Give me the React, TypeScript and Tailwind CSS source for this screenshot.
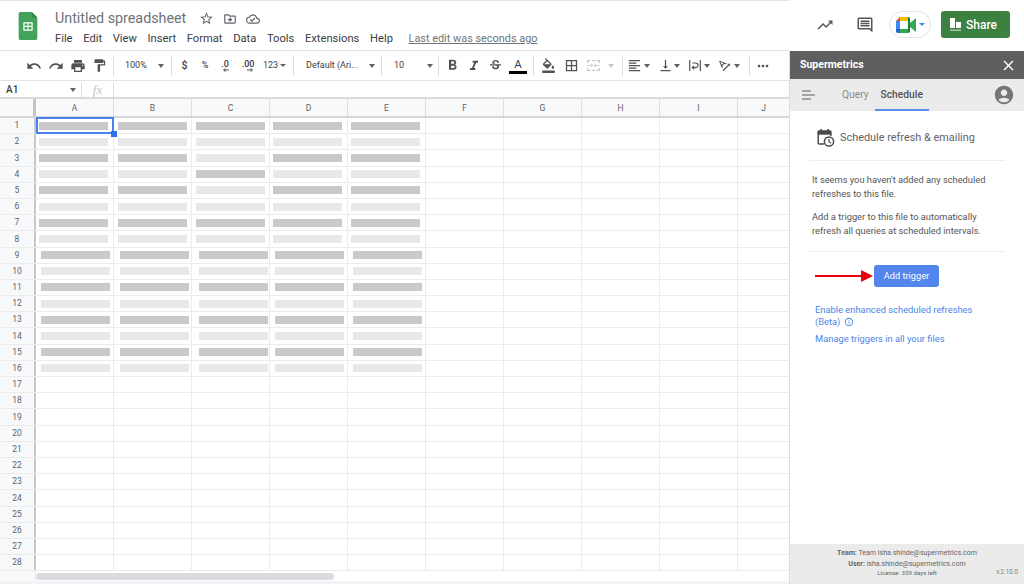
import React from "react";
import {
  MdUndo, MdRedo, MdPrint, MdFormatPaint, MdFormatBold, MdFormatItalic, MdStrikethroughS,
  MdFormatColorFill, MdBorderAll, MdFormatAlignLeft, MdVerticalAlignBottom,
  MdMoreHoriz, MdStarBorder, MdOutlineDriveFileMove, MdOutlineCloudDone, MdTrendingUp, MdOutlineComment,
  MdClose, MdAccountCircle, MdOutlineInfo, MdTextRotationAngleup,
} from "react-icons/md";

const Caret = ({ light }: { light?: boolean }) => (
  <span className={`inline-block w-0 h-0 shrink-0 border-x-[3.5px] border-x-transparent border-t-[4px] ${light ? "border-t-[#c4c7c9]" : "border-t-[#5f6368]"}`} />
);

const Sep = () => (
  <div className="w-[6px] flex justify-center shrink-0"><div className="w-px h-[20px] bg-[#dadce0]" /></div>
);

const Slot = ({ w, children, className = "" }: { w: string; children?: React.ReactNode; className?: string }) => (
  <div className={`${w} flex items-center justify-center shrink-0 ${className}`}>{children}</div>
);

const ic = "text-[#4f5357]";

const TinyArrow = ({ right, className }: { right?: boolean; className: string }) => (
  <svg width="6" height="4" viewBox="0 0 6 4" className={className}>
    <path d={right ? "M0 2h5M3.5 .5L5.5 2 3.5 3.5" : "M6 2H1M2.5 .5L.5 2 2.5 3.5"} stroke="#3c4043" strokeWidth="0.9" fill="none" />
  </svg>
);

function Toolbar() {
  return (
    <div className="h-[30px] border-b border-[#e3e3e3] flex items-center pl-[23px] text-[9px] text-[#3c4043]">
      <Slot w="w-[22px]"><MdUndo size={16} className={ic} /></Slot>
      <Slot w="w-[22px]"><MdRedo size={16} className={ic} /></Slot>
      <Slot w="w-[21px]"><MdPrint size={16} className={ic} /></Slot>
      <Slot w="w-[22px]"><MdFormatPaint size={15} className={ic} /></Slot>
      <Sep />
      <div className="w-[52px] flex items-center justify-between pl-[9px] pr-[4px] shrink-0"><span>100%</span><Caret /></div>
      <Sep />
      <Slot w="w-[17px]" className="ml-[2px] text-[10.5px] font-medium">$</Slot>
      <Slot w="w-[24px]" className="text-[9px] font-medium">%</Slot>
      <Slot w="w-[16px]" className="relative text-[9px] font-medium -mt-[2px]">.0<TinyArrow className="absolute top-[10px] left-[6px]" /></Slot>
      <Slot w="w-[30px]" className="relative text-[9px] font-medium -mt-[2px]">.00<TinyArrow right className="absolute top-[10px] left-[14px]" /></Slot>
      <div className="w-[27px] flex items-center gap-[2px] shrink-0"><span>123</span><span className="inline-block w-0 h-0 border-x-[3px] border-x-transparent border-t-[3.5px] border-t-[#5f6368]" /></div>
      <Sep />
      <div className="w-[82px] flex items-center pl-[10px] shrink-0 gap-[7px]"><span className="w-[56px] whitespace-nowrap">Default (Ari...</span><Caret /></div>
      <Sep />
      <div className="w-[51px] flex items-center justify-between pl-[10px] pr-[2px] shrink-0"><span>10</span><Caret /></div>
      <Sep />
      <Slot w="w-[21px]" className="ml-[1px]"><MdFormatBold size={17} className={ic} /></Slot>
      <Slot w="w-[22px]"><MdFormatItalic size={16} className={ic} /></Slot>
      <Slot w="w-[21px]"><MdStrikethroughS size={15} className={ic} /></Slot>
      <Slot w="w-[24px]"><div className="flex flex-col items-center"><span className="text-[11.5px] leading-[13px]">A</span><div className="w-[18px] h-[3px] bg-black" /></div></Slot>
      <Sep />
      <Slot w="w-[23px]" className="ml-[1px]"><MdFormatColorFill size={15} className={ic} /></Slot>
      <Slot w="w-[22px]"><MdBorderAll size={15} className={ic} /></Slot>
      <Slot w="w-[23px]">
        <svg width="13" height="11" viewBox="0 0 13 11" fill="none" stroke="#c4c7c9" strokeWidth="1.1">
          <path d="M.6 3V.6h3M5 .6h3M9.4 .6h3V3M.6 8v2.4h3M5 10.4h3M9.4 10.4h3V8M.6 5.5h3M9.4 5.5h3M4 4l1.5 1.5L4 7M9 4L7.5 5.5 9 7" />
        </svg>
      </Slot>
      <Slot w="w-[14px]" className="pr-[3px]"><Caret light /></Slot>
      <Sep />
      <div className="w-[26px] flex items-center shrink-0 gap-[2px] pl-[2px]"><MdFormatAlignLeft size={15} className={ic} /><Caret /></div>
      <div className="w-[31px] flex items-center shrink-0 gap-[1px] pl-[7px]"><MdVerticalAlignBottom size={15} className={ic} /><Caret /></div>
      <div className="w-[28px] flex items-center shrink-0 gap-[3px] pl-[7px]">
        <svg width="12" height="11" viewBox="0 0 12 11" fill="none" stroke="#4f5357" strokeWidth="1.2" className="shrink-0">
          <path d="M.7 0v11M11.3 0v11M3.5 3h3.2a2.3 2.3 0 0 1 0 4.6H3.5M5 6l-1.7 1.6L5 9.2" />
        </svg>
        <Caret />
      </div>
      <div className="w-[36px] flex items-center shrink-0 gap-[2px] pl-[7px]"><MdTextRotationAngleup size={15} className={ic} /><Caret /></div>
      <Sep />
      <Slot w="w-[22px]"><MdMoreHoriz size={16} className={ic} /></Slot>
    </div>
  );
}

const columns = ["A", "B", "C", "D", "E", "F", "G", "H", "I", "J"];
const colW = ["w-[78px]", "w-[78px]", "w-[78px]", "w-[78px]", "w-[78px]", "w-[78px]", "w-[78px]", "w-[78px]", "w-[78px]", "flex-1"];
const firstMl = ["ml-[3px]", "ml-[4px]", "ml-[4px]", "ml-[3px]", "ml-[3px]"];
const lastMl = ["ml-[5px]", "ml-[6px]", "ml-[7px]", "ml-[5px]", "ml-[5px]"];

function isDark(row: number, col: number) {
  if (row === 3 || row === 5) return col !== 2;
  if (row === 4) return col === 2;
  return row % 2 === 1;
}

function Row({ n }: { n: number }) {
  return (
    <div className="h-[16.2px] flex border-b border-[#ececec]">
      <div className="w-[36px] shrink-0 bg-[#f8f9fa] border-r-2 border-[#c7c7c7] flex items-center justify-center text-[8.5px] text-[#5f6368]">{n}</div>
      {columns.map((c, i) => (
        <div key={c} className={`${colW[i]} ${i < 9 ? "shrink-0 border-r border-[#ececec]" : ""} relative flex items-center`}>
          {i < 5 && n <= 16 && (
            <div className={`${n <= 8 ? firstMl[i] : lastMl[i]} w-[69px] h-[8px] ${isDark(n, i) ? "bg-[#c9c9c9]" : "bg-[#e8e8e8]"}`} />
          )}
          {n === 1 && i === 0 && (
            <div className="absolute z-10 left-0 -top-px w-[78px] h-[17px] border-2 border-[#4a80ec]">
              <div className="absolute -right-[5px] -bottom-[5px] w-[6px] h-[6px] bg-[#2f6fec]" />
            </div>
          )}
        </div>
      ))}
    </div>
  );
}

function SheetsLogo() {
  return (
    <svg width="20" height="28" viewBox="0 0 20 30">
      <path d="M2 0h12l6 6v22a2 2 0 0 1-2 2H2a2 2 0 0 1-2-2V2a2 2 0 0 1 2-2z" fill="#43a35a" />
      <path d="M14 0l6 6h-6z" fill="#2f8a47" />
      <path d="M5 11h10v9H5z M6.3 12.3v2.4h3.1v-2.4z M10.6 12.3v2.4h3.1v-2.4z M6.3 16v2.7h3.1V16z M10.6 16v2.7h3.1V16z" fill="#fff" fillRule="evenodd" />
    </svg>
  );
}

function MeetLogo() {
  return (
    <svg width="20" height="16" viewBox="0 0 20 16">
      <path d="M4 0v4H0z" fill="#ea4335" />
      <path d="M0 4h4v8H0z" fill="#4285f4" />
      <path d="M0 12h4v4H2a2 2 0 0 1-2-2z" fill="#1967d2" />
      <path d="M4 12h8v4H4z" fill="#34a853" />
      <path d="M4 0h8v4H4z" fill="#fbbc04" />
      <path d="M12 0v16a2 2 0 0 0 2-2V2a2 2 0 0 0-2-2z" fill="#188038" />
      <path d="M14 6l6-5v14l-6-5z" fill="#34a853" />
    </svg>
  );
}

function ScheduleIcon() {
  return (
    <svg width="18" height="20" viewBox="0 0 18 20" fill="none" stroke="#4a4a4a">
      <path d="M7 16H2.2a1 1 0 0 1-1-1V4a1 1 0 0 1 1-1h10.6a1 1 0 0 1 1 1v4" strokeWidth="1.5" />
      <path d="M1 3.2h13v3.2H1z" fill="#4a4a4a" strokeWidth="0.5" />
      <path d="M4 1v3M11 1v3" strokeWidth="1.6" />
      <circle cx="12" cy="13.5" r="4.6" strokeWidth="1.5" />
      <path d="M12 11v3l2 1" strokeWidth="1.2" />
    </svg>
  );
}

function Panel() {
  return (
    <div className="w-[235px] shrink-0 flex flex-col border-l border-[#dadce0] bg-white text-[#5a5a5a]">
      <div className="h-[28px] bg-[#5f5f5f] flex items-center justify-between pl-[10px] pr-[7px] text-white text-[10.5px] font-bold">
        <span>Supermetrics</span>
        <MdClose size={17} />
      </div>
      <div className="h-[32px] bg-[#ebebeb] flex items-center pl-[12px] pr-[9px] relative text-[10.3px]">
        <svg width="14" height="10" viewBox="0 0 14 10" className="shrink-0"><path d="M0 1h9M0 5h13M0 9h9" stroke="#5f5f5f" strokeWidth="1.2" /></svg>
        <span className="ml-[26px] text-[#8a8a8a]">Query</span>
        <div className="ml-[6px] w-[54px] h-full flex items-center justify-center border-b-2 border-[#5b8def] font-medium text-[#555] pt-[1px]">Schedule</div>
        <MdAccountCircle size={22} className="ml-auto text-[#767676]" />
      </div>
      <div className="flex-1 flex flex-col">
        <div className="mx-[19px] h-[50px] flex items-center border-b border-[#eeeeee] pl-[8px] pt-[5px] gap-[5px]">
          <ScheduleIcon />
          <span className="text-[10.9px] text-[#5f6368]">Schedule refresh &amp; emailing</span>
        </div>
        <div className="mx-[19px] pl-[3px] pt-[12px] pb-[13px] border-b border-[#eeeeee] text-[9.3px] leading-[14px] text-[#555]">
          <p className="mb-[9px]">It seems you haven't added any scheduled<br />refreshes to this file.</p>
          <p>Add a trigger to this file to automatically<br />refresh all queries at scheduled intervals.</p>
        </div>
        <div className="flex items-center mt-[13px] ml-[25px]">
          <svg width="58" height="12" viewBox="0 0 58 12"><path d="M0 6h48" stroke="#e8000d" strokeWidth="1.8" /><path d="M46 0l12 6-12 6z" fill="#e8000d" /></svg>
          <button className="ml-[1px] w-[65px] h-[22px] rounded-[3px] bg-[#5286ec] text-white text-[9.2px]">Add trigger</button>
        </div>
        <div className="ml-[25px] mt-[17px] text-[9.35px] leading-[12px] text-[#4a86e8]">
          <p>Enable enhanced scheduled refreshes<br /><span className="inline-flex items-center gap-[4px]">(Beta)<MdOutlineInfo size={10} /></span></p>
          <p className="mt-[5px]">Manage triggers in all your files</p>
        </div>
      </div>
      <div className="h-[40px] bg-[#ebebeb] relative flex flex-col items-center pt-[4px] text-[7.05px] leading-[10.5px] text-[#666]">
        <p><b>Team:</b> Team isha.shinde@supermetrics.com</p>
        <p><b>User:</b> isha.shinde@supermetrics.com</p>
        <p className="text-[6.2px] leading-[9px]">License: 359 days left</p>
        <span className="absolute right-[6px] bottom-[7px] text-[6.3px] text-[#777]">v.2.10.0</span>
      </div>
    </div>
  );
}

export default function App() {
  const rows = Array.from({ length: 28 }, (_, i) => i + 1);
  return (
    <div className="w-[1024px] h-[584px] overflow-hidden bg-white flex flex-col" style={{ fontFamily: "Roboto, sans-serif" }}>
      <header className="h-[51px] shrink-0 flex">
        <div className="w-[789px] shrink-0 border-t border-[#e3e3e3] border-b flex pl-[18px]">
          <div className="pt-[11px]"><SheetsLogo /></div>
          <div className="ml-[17px] flex flex-col pt-[8px]">
            <div className="flex items-center h-[19px]">
              <span className="text-[14.3px] text-[#6f7377]">Untitled spreadsheet</span>
              <MdStarBorder size={15} className="ml-[13px] text-[#5f6368]" />
              <MdOutlineDriveFileMove size={14} className="ml-[9px] text-[#5f6368]" />
              <MdOutlineCloudDone size={14} className="ml-[9px] text-[#5f6368]" />
            </div>
            <nav className="flex items-center mt-[3px] text-[11.2px] text-[#3c4043] gap-[10.6px] whitespace-nowrap">
              {["File", "Edit", "View", "Insert", "Format", "Data", "Tools", "Extensions", "Help"].map((m) => <span key={m}>{m}</span>)}
              <span className="ml-[5px] text-[10.9px] underline text-[#70757a]">Last edit was seconds ago</span>
            </nav>
          </div>
        </div>
        <div className="flex-1 flex items-start pt-[11px] pl-[27px]">
          <div className="w-[18px] h-[27px] flex items-center"><MdTrendingUp size={18} className="text-[#555]" /></div>
          <div className="ml-[22px] w-[19px] h-[27px] flex items-center"><MdOutlineComment size={18} className="text-[#555]" /></div>
          <div className="ml-[14px] w-[42px] h-[27px] rounded-full border border-[#e3e3e3] flex items-center justify-center gap-[3px]">
            <MeetLogo />
            <span className="inline-block w-0 h-0 border-x-[3px] border-x-transparent border-t-[3.5px] border-t-[#4285f4]" />
          </div>
          <div className="ml-[10px] w-[69px] h-[27px] rounded-[3px] bg-[#3c8042] flex items-center pl-[9px] gap-[5px] text-white text-[12px] font-medium">
            <svg width="11" height="14" viewBox="0 0 11 14" fill="#fff"><path d="M0 0h5v10H0z" /><path d="M6 4h5v6H6z" /><path d="M0 11.5h11v1.5H0z" opacity=".55" /></svg>
            Share
          </div>
        </div>
      </header>
      <div className="flex-1 flex min-h-0">
        <div className="w-[789px] shrink-0 flex flex-col">
          <Toolbar />
          <div className="h-[18px] border-b-2 border-[#dadada] flex items-center pt-[1px] text-[10px] text-[#3c4043]">
            <div className="w-[81px] flex items-center justify-between pl-[6px] pr-[5px] font-medium"><span>A1</span><Caret /></div>
            <div className="w-px h-[14px] bg-[#dadce0]" />
            <div className="w-[31px] text-center text-[13px] italic text-[#c2c2c2]" style={{ fontFamily: "'Liberation Serif', serif" }}>fx</div>
            <div className="w-px h-[14px] bg-[#dadce0]" />
          </div>
          <div className="h-[19px] flex border-b-2 border-[#d6d6d6] bg-[#f8f9fa]">
            <div className="w-[36px] shrink-0 border-r-[3px] border-[#c4c4c4]" />
            {columns.map((c, i) => (
              <div key={c} className={`${colW[i]} ${i < 9 ? "shrink-0 border-r border-[#dedede]" : ""} flex items-center justify-center pt-[2px] text-[8.5px] text-[#5f6368]`}>{c}</div>
            ))}
          </div>
          {rows.map((n) => <Row key={n} n={n} />)}
          <div className="h-[10px] flex items-center">
            <div className="w-[36px] h-full bg-[#f8f9fa] border-r border-[#e8e8e8]" />
            <div className="w-[298px] h-[7px] rounded-full bg-[#dadce0]" />
          </div>
          <div className="flex-1 bg-[#f1f3f4]" />
        </div>
        <Panel />
      </div>
    </div>
  );
}
